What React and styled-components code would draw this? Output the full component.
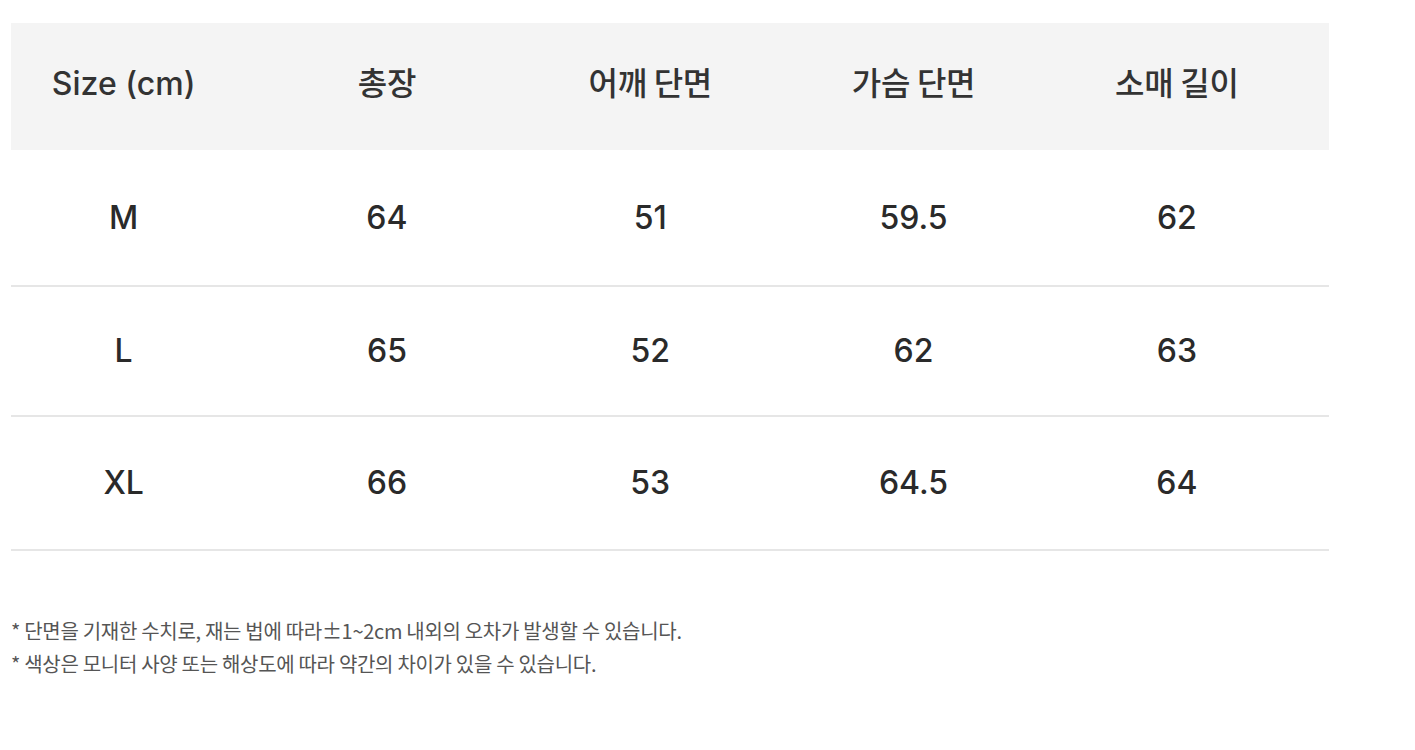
import React from "react";
import styled, { createGlobalStyle } from "styled-components";

const Global = createGlobalStyle`
  html, body { margin: 0; padding: 0; background: #ffffff; }
  body { font-family: Inter, "Noto Sans CJK KR", sans-serif; color: #2b2b2b; }
`;

const Page = styled.div`
  padding: 23px 0 0 11px;
  width: 1318px;
`;

const Table = styled.div`
  display: flex;
  flex-direction: column;
  width: 1318px;
`;

const Row = styled.div`
  height: ${(p) => p.$h}px;
  box-sizing: border-box;
  padding-bottom: ${(p) => (p.$head ? "5px" : "0")};
  background: ${(p) => (p.$head ? "#f4f4f4" : "#ffffff")};
  border-bottom: ${(p) => (p.$head ? "none" : "2px solid #e6e6e6")};
  display: flex;
  align-items: center;
`;

const Cells = styled.div`
  display: grid;
  grid-template-columns: repeat(5, 263.3px);
  align-items: center;
  margin-left: -19px;
  width: 1316.5px;
`;

const Cell = styled.div`
  text-align: center;
  font-family: ${(p) =>
    p.$ko ? `"Noto Sans CJK KR", sans-serif` : `Inter, "Noto Sans CJK KR", sans-serif`};
  font-size: 32px;
  font-weight: 500;
  letter-spacing: ${(p) => (p.$ko ? "-0.3px" : "0")};
  color: ${(p) => (p.$head ? "#333333" : "#2a2a2a")};
  line-height: 1;
  padding-bottom: ${(p) => (p.$ko ? "6px" : "0")};
  white-space: nowrap;
`;

const Notes = styled.div`
  margin-top: 69px;
  display: flex;
  flex-direction: column;
  gap: 11px;
`;

const Note = styled.p`
  margin: 0;
  font-family: "Noto Sans CJK KR", sans-serif;
  font-size: 20px;
  line-height: 22px;
  letter-spacing: -0.3px;
  color: #555555;
`;

const headers = ["Size (cm)", "총장", "어깨 단면", "가슴 단면", "소매 길이"];
const rows = [
  { h: 137, vals: ["M", "64", "51", "59.5", "62"] },
  { h: 130, vals: ["L", "65", "52", "62", "63"] },
  { h: 134, vals: ["XL", "66", "53", "64.5", "64"] },
];

export default function App() {
  return (
    <>
      <Global />
      <Page>
        <Table>
          <Row $head $h={127}>
            <Cells>
              {headers.map((h, i) => (
                <Cell key={h} $head $ko={i > 0}>
                  {h}
                </Cell>
              ))}
            </Cells>
          </Row>
          {rows.map((r) => (
            <Row key={r.vals[0]} $h={r.h}>
              <Cells>
                {r.vals.map((v, i) => (
                  <Cell key={i}>{v}</Cell>
                ))}
              </Cells>
            </Row>
          ))}
        </Table>
        <Notes>
          <Note>* 단면을 기재한 수치로, 재는 법에 따라±1~2cm 내외의 오차가 발생할 수 있습니다.</Note>
          <Note>* 색상은 모니터 사양 또는 해상도에 따라 약간의 차이가 있을 수 있습니다.</Note>
        </Notes>
      </Page>
    </>
  );
}
